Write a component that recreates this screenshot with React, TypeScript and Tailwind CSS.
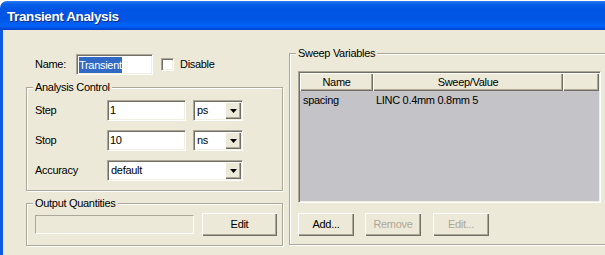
import React from 'react';

// classic XP-ish bevels
const sunken =
  'border border-t-[#aca899] border-l-[#aca899] border-b-white border-r-white shadow-[inset_1px_1px_0_#716f64,inset_-1px_-1px_0_#f1efe2]';
const raised =
  'bg-[#ece9d8] shadow-[inset_1px_1px_0_#fff,inset_-1px_-1px_0_#716f64,inset_-2px_-2px_0_#aca899]';

const GroupBox: React.FC<{ label: string; className?: string; children?: React.ReactNode }> = ({
  label,
  className,
  children,
}) => (
  <div className={`relative border border-[#aca899] shadow-[inset_1px_1px_0_#fff,1px_1px_0_#fff] ${className ?? ''}`}>
    <span className="absolute -top-[7px] left-[6px] bg-[#ece9d8] px-[2px] leading-[13px]">{label}</span>
    {children}
  </div>
);

const Arrow = () => (
  <div className={`flex h-[17px] w-[16px] shrink-0 items-center justify-center ${raised}`}>
    <svg width="7" height="4" viewBox="0 0 7 4">
      <path d="M0 0h7L3.5 4z" fill="#000" />
    </svg>
  </div>
);

const Combo: React.FC<{ value: string; className: string }> = ({ value, className }) => (
  <div className={`flex h-[21px] items-center bg-white p-[1px] ${sunken} ${className}`}>
    <span className="flex-1 pl-[2px]">{value}</span>
    <Arrow />
  </div>
);

const TextBox: React.FC<{ value: string }> = ({ value }) => (
  <div className={`flex h-[21px] w-[79px] items-center bg-white pl-[2px] ${sunken}`}>{value}</div>
);

const Button: React.FC<{ label: string; className: string; disabled?: boolean }> = ({ label, className, disabled }) => (
  <div
    className={`flex h-[23px] items-center justify-center ${raised} ${disabled ? 'text-[#aca899]' : 'text-black'} ${className}`}
  >
    {label}
  </div>
);

const Field: React.FC<{ label: string; children: React.ReactNode }> = ({ label, children }) => (
  <div className="flex h-[21px] items-center pl-[8px]">
    <span className="w-[72px]">{label}</span>
    {children}
  </div>
);

export default function App() {
  return (
    <div className="h-[255px] w-[605px] overflow-hidden bg-white pt-[1px] font-['Liberation_Sans',Arial,sans-serif] text-[11px] leading-[13px] tracking-[-0.3px] text-black">
      {/* Title bar */}
      <div className="flex h-[29px] items-center rounded-tl-[7px] bg-[linear-gradient(180deg,#2a7cf0_0px,#0a5fe8_3px,#0055e5_8px,#0055e5_18px,#0063f7_25px,#0048d8_28px,#003cbe_29px)] pl-[7px] pt-[2px]">
        <span className="text-[13.5px] font-bold tracking-[-0.4px] text-white [text-shadow:1px_1px_0_#0c2a8a]">
          Transient Analysis
        </span>
      </div>

      {/* Body */}
      <div className="flex h-[225px] border-l-[3px] border-l-[#0c5ae6] bg-[#ece9d8]">
        {/* Left column */}
        <div className="ml-[23px] flex w-[257px] shrink-0 flex-col">
          <div className="mt-[24px] flex h-[21px] items-center pl-[9px]">
            <span className="w-[41px]">Name:</span>
            <div className={`flex h-[21px] w-[77px] items-center bg-white pl-[2px] ${sunken}`}>
              <span className="bg-[#316ac5] leading-[16px] text-white">Transient</span>
            </div>
            <div className={`ml-[8px] h-[13px] w-[13px] bg-white ${sunken}`} />
            <span className="ml-[6px]">Disable</span>
          </div>

          <GroupBox label="Analysis Control" className="mt-[12px] h-[104px]">
            <div className="flex flex-col gap-[9px] pt-[12px]">
              <Field label="Step">
                <TextBox value="1" />
                <Combo value="ps" className="ml-[7px] w-[50px]" />
              </Field>
              <Field label="Stop">
                <TextBox value="10" />
                <Combo value="ns" className="ml-[7px] w-[50px]" />
              </Field>
              <Field label="Accuracy">
                <Combo value="default" className="w-[136px]" />
              </Field>
            </div>
          </GroupBox>

          <GroupBox label="Output Quantities" className="mt-[12px] h-[43px]">
            <div className="flex h-full items-center pl-[8px]">
              <div className="h-[19px] w-[159px] border border-t-[#aca899] border-l-[#aca899] border-b-white border-r-white" />
              <Button label="Edit" className="ml-[8px] w-[75px]" />
            </div>
          </GroupBox>
        </div>

        {/* Right column */}
        <div className="ml-[6px] mt-[23px] shrink-0">
          <GroupBox label="Sweep Variables" className="h-[192px] w-[330px]">
            <div className="ml-[8px] mt-[17px] flex h-[132px] w-[303px] flex-col bg-[#c4c3c8] p-[1px] border border-t-[#aca899] border-l-[#aca899] border-b-white border-r-white shadow-[inset_1px_1px_0_#716f64,inset_-1px_-1px_0_#f1efe2]">
              <div className="flex h-[18px] shrink-0">
                <div className={`flex w-[73px] items-center justify-center ${raised}`}>Name</div>
                <div className={`flex w-[190px] items-center justify-center ${raised}`}>Sweep/Value</div>
                <div className={`w-[36px] ${raised}`} />
              </div>
              <div className="flex h-[18px] items-center">
                <span className="w-[73px] pl-[3px]">spacing</span>
                <span className="pl-[3px]">LINC 0.4mm 0.8mm 5</span>
              </div>
            </div>
            <div className="ml-[8px] mt-[10px] flex">
              <Button label="Add..." className="w-[56px]" />
              <Button label="Remove" disabled className="ml-[11px] w-[56px]" />
              <Button label="Edit..." disabled className="ml-[12px] w-[56px]" />
            </div>
          </GroupBox>
        </div>
      </div>
    </div>
  );
}
